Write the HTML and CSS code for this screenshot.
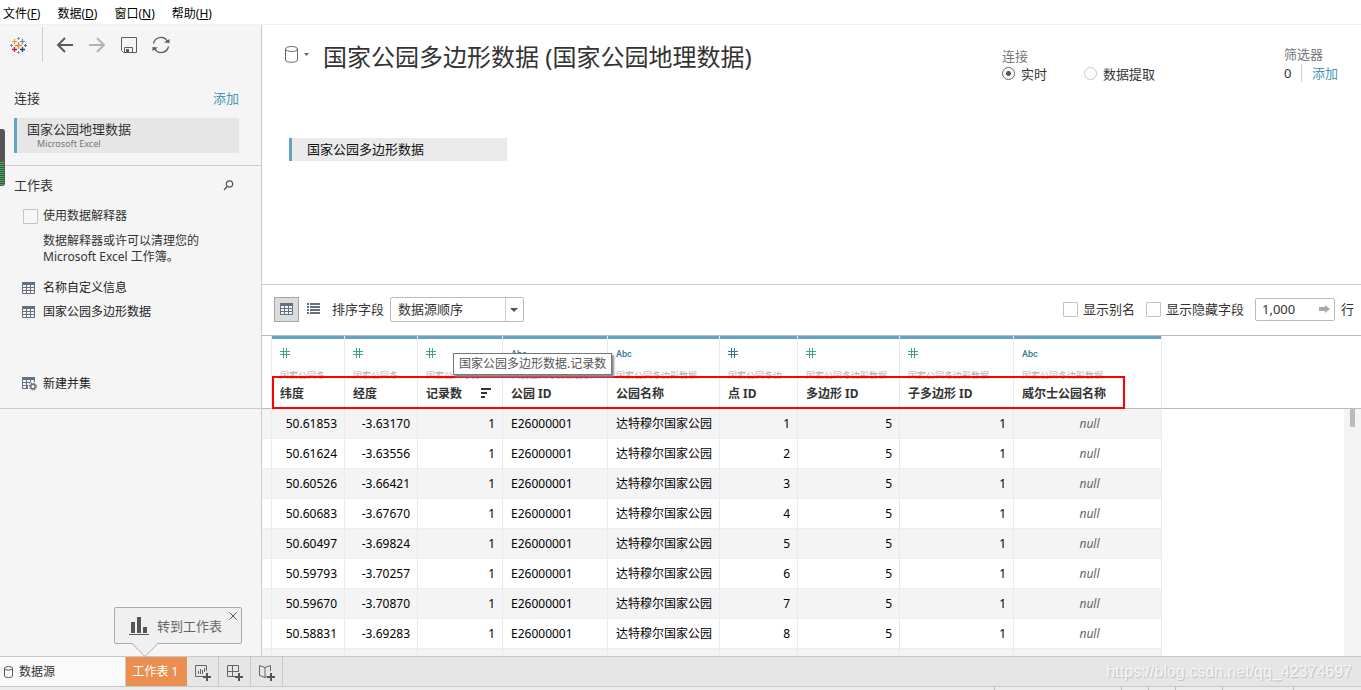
FILE: index.html
```html
<!DOCTYPE html>
<html lang="zh-CN">
<head>
<meta charset="utf-8">
<title>数据源</title>
<link rel="stylesheet" href="styles.css">
</head>
<body>
<svg class="defs" aria-hidden="true">
  <symbol id="grid" viewBox="0 0 13 12"><path d="M0 0h13v12H0z" fill="#667180"/><path d="M1 3h3v2H1zM5 3h3v2H5zM9 3h3v2H9zM1 6h3v2H1zM5 6h3v2H5zM9 6h3v2H9zM1 9h3v2H1zM5 9h3v2H5zM9 9h3v2H9z" fill="#f5f5f5"/></symbol>
  <symbol id="hash" viewBox="0 0 10 10"><path d="M3.5 0v10M6.5 0v10M0 3.5h10M0 6.5h10" stroke="currentColor" fill="none"/></symbol>
  <symbol id="plus" viewBox="0 0 8 8"><path d="M4 0v8M0 4h8" stroke="#555" stroke-width="2"/></symbol>
</svg>
<nav class="menu">
  <button>文件(<u>F</u>)</button><button>数据(<u>D</u>)</button><button>窗口(<u>N</u>)</button><button>帮助(<u>H</u>)</button>
</nav>
<div class="workspace">
  <aside class="sidebar">
    <div class="toolbar">
      <button class="logo" aria-label="开始"><svg width="18" height="18" viewBox="0 0 18 18" fill="none"><path d="M9.500 6v7M6 9.500h7" stroke="#eb8a3c" stroke-width="1.500"/><path d="M5.500 3v5M3 5.500h5" stroke="#e8953a" stroke-width="1.200"/><path d="M13.500 3v5M11 5.500h5" stroke="#5b879b" stroke-width="1.200"/><path d="M5.500 11v5M3 13.500h5" stroke="#c72037" stroke-width="1.300"/><path d="M13.500 11v5M11 13.500h5" stroke="#1f447e" stroke-width="1.300"/><path d="M9.500 1v3M8 2.500h3M1 9.500h3M2.500 8v3" stroke="#7299ac"/><path d="M9.500 15v3M8 16.500h3" stroke="#8a93b5"/><path d="M15 9.500h3M16.500 8v3" stroke="#5c6692"/></svg></button>
      <button aria-label="后退"><svg width="18" height="16" viewBox="0 0 18 16" fill="none" stroke="#5c5c5c" stroke-width="2"><path d="M17 8H2M9 1L2 8l7 7"/></svg></button>
      <button aria-label="前进"><svg width="18" height="16" viewBox="0 0 18 16" fill="none" stroke="#b3b3b3" stroke-width="2"><path d="M1 8h15M9 1l7 7-7 7"/></svg></button>
      <button aria-label="保存"><svg width="18" height="18" viewBox="0 0 18 18" fill="none" stroke="#5c5c5c"><path d="M1.500 1.500h15v15h-13l-2-2zM4.500 16v-4.500h8V16"/><path d="M6 13h3v3H6z" fill="#5c5c5c" stroke="none"/></svg></button>
      <button aria-label="刷新"><svg width="18" height="18" viewBox="0 0 18 18" fill="none" stroke="#5c5c5c" stroke-width="1.300"><path d="M1.500 7.500A7.500 7.500 0 0 1 15.500 5.500M16.500 10.500A7.500 7.500 0 0 1 2.500 12.500"/><path d="M12 6.500l5.500.500V3zM6 11.500L.5 11v4z" fill="#5c5c5c" stroke="none"/></svg></button>
    </div>
    <section class="connections">
      <header><h2>连接</h2><a href="#">添加</a></header>
      <button class="connection"><b>国家公园地理数据</b><small>Microsoft Excel</small></button>
    </section>
    <section class="sheets">
      <header><h2>工作表</h2><button aria-label="搜索"><svg width="11" height="11" viewBox="0 0 11 11" fill="none" stroke="#555" stroke-width="1.200"><circle cx="6.500" cy="4" r="3.200"/><path d="M4 6.500L1 10"/></svg></button></header>
      <label class="check"><input type="checkbox">使用数据解释器</label>
      <p>数据解释器或许可以清理您的 Microsoft Excel 工作簿。</p>
      <ul>
        <li><svg width="13" height="12"><use href="#grid"/></svg>名称自定义信息</li>
        <li><svg width="13" height="12"><use href="#grid"/></svg>国家公园多边形数据</li>
      </ul>
      <button class="union"><svg width="15" height="14" viewBox="0 0 15 14"><path d="M0 0h13v5H9L6 9v3H0z" fill="#667180"/><path d="M1 3h3v2H1zM5 3h3v2H5zM9 3h3v2H9zM1 6h3v2H1zM5 6h2v2H5zM1 9h3v2H1z" fill="#f5f5f5"/><circle cx="11" cy="9.500" r="4.500" fill="#f5f5f5"/><circle cx="11" cy="9.500" r="2.300" fill="none" stroke="#667180" stroke-width="1.500"/><circle cx="11" cy="9.500" r="3.400" fill="none" stroke="#667180" stroke-width="1.200" stroke-dasharray="1.400 1.270"/></svg>新建并集</button>
    </section>
    <div class="meter"></div>
  </aside>
  <main>
    <section class="canvas">
      <div class="heading">
        <button class="source" aria-label="数据源"><svg width="24" height="17" viewBox="0 0 24 17" fill="none" stroke="#666"><path d="M.5 3v11c0 3 12 3 12 0V3"/><ellipse cx="6.500" cy="3" rx="6" ry="2.500"/><path d="M19 7h5l-2.500 3z" fill="#666" stroke="none"/></svg></button>
        <h1>国家公园多边形数据 (国家公园地理数据)</h1>
        <fieldset class="mode">
          <legend>连接</legend>
          <label><input type="radio" name="mode" checked>实时</label>
          <label><input type="radio" name="mode">数据提取</label>
        </fieldset>
        <div class="filters"><span>筛选器</span><div><output>0</output><a href="#">添加</a></div></div>
      </div>
      <button class="node">国家公园多边形数据</button>
    </section>
    <section class="options">
      <button class="view on" aria-label="网格"><svg width="13" height="12"><use href="#grid"/></svg></button>
      <button class="view" aria-label="列表"><svg width="13" height="12" viewBox="0 0 13 12" fill="#667180"><path d="M0 0h2v2H0zM0 3h2v2H0zM0 6h2v2H0zM0 9h2v2H0zM3 0h10v2H3zM3 3h10v2H3zM3 6h10v2H3zM3 9h10v2H3z"/></svg></button>
      <label for="sort">排序字段</label>
      <div class="picker"><select id="sort"><option>数据源顺序</option></select><svg width="8" height="4" viewBox="0 0 8 4"><path d="M0 0h8L4 4z" fill="#555"/></svg></div>
      <label class="check first"><input type="checkbox">显示别名</label>
      <label class="check"><input type="checkbox">显示隐藏字段</label>
      <div class="rows"><input id="rows" type="text" value="1,000"><svg width="11" height="8" viewBox="0 0 11 8"><path d="M0 2h6V0l5 4-5 4V6H0z" fill="#aaa"/></svg></div>
      <label for="rows">行</label>
    </section>
    <section class="data">
      <table>
        <colgroup><col class="w-gutter"><col class="w-lat"><col class="w-lat"><col class="w-count"><col class="w-id"><col class="w-name"><col class="w-point"><col class="w-poly"><col class="w-sub"><col class="w-wales"><col></colgroup>
        <thead><tr>
          <th class="gutter"></th>
          <th><div class="field"><svg><use href="#hash"/></svg><small>国家公园多</small><span>纬度</span></div></th>
          <th><div class="field"><svg><use href="#hash"/></svg><small>国家公园多</small><span>经度</span></div></th>
          <th><div class="field"><svg><use href="#hash"/></svg><small>国家公园多边</small><span>记录数<svg class="sort" viewBox="0 0 11 10"><path d="M1 1h10M1 5h6M1 9h4" stroke="#333" stroke-width="2"/></svg></span></div></th>
          <th><div class="field"><i>Abc</i><small>国家公园多边形数据</small><span>公园 ID</span></div></th>
          <th><div class="field"><i>Abc</i><small>国家公园多边形数据</small><span>公园名称</span></div></th>
          <th><div class="field dim"><svg><use href="#hash"/></svg><small>国家公园多边</small><span>点 ID</span></div></th>
          <th><div class="field"><svg><use href="#hash"/></svg><small>国家公园多边形数据</small><span>多边形 ID</span></div></th>
          <th><div class="field"><svg><use href="#hash"/></svg><small>国家公园多边形数据</small><span>子多边形 ID</span></div></th>
          <th><div class="field"><i>Abc</i><small>国家公园多边形数据</small><span>威尔士公园名称</span></div></th>
          <th class="rest"></th>
        </tr></thead>
        <tbody>
          <tr><td></td><td>50.61853</td><td>-3.63170</td><td>1</td><td>E26000001</td><td>达特穆尔国家公园</td><td>1</td><td>5</td><td>1</td><td>null</td><td></td></tr>
          <tr><td></td><td>50.61624</td><td>-3.63556</td><td>1</td><td>E26000001</td><td>达特穆尔国家公园</td><td>2</td><td>5</td><td>1</td><td>null</td><td></td></tr>
          <tr><td></td><td>50.60526</td><td>-3.66421</td><td>1</td><td>E26000001</td><td>达特穆尔国家公园</td><td>3</td><td>5</td><td>1</td><td>null</td><td></td></tr>
          <tr><td></td><td>50.60683</td><td>-3.67670</td><td>1</td><td>E26000001</td><td>达特穆尔国家公园</td><td>4</td><td>5</td><td>1</td><td>null</td><td></td></tr>
          <tr><td></td><td>50.60497</td><td>-3.69824</td><td>1</td><td>E26000001</td><td>达特穆尔国家公园</td><td>5</td><td>5</td><td>1</td><td>null</td><td></td></tr>
          <tr><td></td><td>50.59793</td><td>-3.70257</td><td>1</td><td>E26000001</td><td>达特穆尔国家公园</td><td>6</td><td>5</td><td>1</td><td>null</td><td></td></tr>
          <tr><td></td><td>50.59670</td><td>-3.70870</td><td>1</td><td>E26000001</td><td>达特穆尔国家公园</td><td>7</td><td>5</td><td>1</td><td>null</td><td></td></tr>
          <tr><td></td><td>50.58831</td><td>-3.69283</td><td>1</td><td>E26000001</td><td>达特穆尔国家公园</td><td>8</td><td>5</td><td>1</td><td>null</td><td></td></tr>
          <tr><td></td><td></td><td></td><td></td><td></td><td></td><td></td><td></td><td></td><td></td><td></td></tr>
        </tbody>
      </table>
      <div class="scrollbar"><div class="thumb"></div></div>
      <div class="marker"></div>
      <div class="tooltip" role="tooltip">国家公园多边形数据.记录数</div>
    </section>
  </main>
</div>
<footer class="tabs">
  <button class="tab-source"><svg width="9" height="12" viewBox="0 0 9 12" fill="none" stroke="#555"><path d="M.5 2v8c0 2 8 2 8 0V2"/><ellipse cx="4.500" cy="2.300" rx="4" ry="1.800"/></svg>数据源</button>
  <button class="tab-sheet">工作表 1</button>
  <button class="add" aria-label="新建工作表"><svg width="16" height="16" viewBox="0 0 16 16" fill="none" stroke="#666"><path d="M8 11.500H.5V.5h11V6M3.500 9V6M5.500 9V4M7.500 9V5M9.500 7V3"/><use href="#plus" x="8" y="8" width="8" height="8"/></svg></button>
  <button class="add" aria-label="新建仪表板"><svg width="16" height="16" viewBox="0 0 16 16" fill="none" stroke="#666"><path d="M8 11.500H.5V.5h11V6M5.500 0v12M0 6.500h12"/><use href="#plus" x="8" y="8" width="8" height="8"/></svg></button>
  <button class="add" aria-label="新建故事"><svg width="16" height="16" viewBox="0 0 16 16" fill="none" stroke="#666"><path d="M6 2.500L.5.500v10L6 12.500zl5.500-2V6M6 12.500l2-1"/><use href="#plus" x="8" y="8" width="8" height="8"/></svg></button>
  <span class="watermark">https://blog.csdn.net/qq_42374697</span>
  <div class="hint">
    <svg class="tail" width="26" height="14" viewBox="0 0 26 14"><path d="M0 0h26L13 13z" fill="#f0f0f0"/><path d="M0 .5l13 13 13-13" fill="none" stroke="#aaa"/></svg>
    <svg width="20" height="18" viewBox="0 0 20 18" fill="#555"><path d="M2 5h4v11H2zM8 0h4v16H8zM14 10h4v6h-4zM0 17h20v1H0z"/></svg>
    <span>转到工作表</span>
    <button aria-label="关闭"><svg width="8" height="8" viewBox="0 0 8 8" stroke="#555"><path d="M.5.500l7 7M7.500.500l-7 7"/></svg></button>
  </div>
</footer>
<div class="status"><span class="s1"></span><span class="s2"></span><span class="s3"></span><span class="s4"></span><span class="s5"></span><span class="s6"></span></div>
</body>
</html>
```
FILE: styles.css
```css
* { box-sizing: border-box; }
body {
  margin: 0;
  height: 100vh;
  display: flex;
  flex-direction: column;
  overflow: hidden;
  background: #fff;
  color: #333;
  font: 12px/16px "Noto Sans", "Noto Sans CJK SC", sans-serif;
}
button, input, select { font: inherit; color: inherit; }
button { background: none; border: 0; padding: 0; text-align: left; }
svg { display: block; flex: none; }
h1, h2, p, ul { margin: 0; padding: 0; font-weight: 400; }
a { color: #4996b2; text-decoration: none; }
.defs { position: absolute; width: 0; height: 0; }

.menu { display: flex; gap: 17px; height: 25px; padding: 4px 3px 0; color: #000; border-bottom: 1px solid #f0f0f0; }
.workspace { flex: 1; min-height: 0; display: flex; }

.sidebar { position: relative; width: 262px; flex: none; background: #f5f5f5; border-right: 1px solid #ccc; }
.toolbar { display: flex; align-items: center; gap: 14px; height: 39px; padding-left: 9px; }
.logo { height: 35px; width: 34px; border-right: 1px solid #ccc; }
.logo + button { margin-left: -1px; }
.sidebar header { display: flex; justify-content: space-between; align-items: center; height: 20px; }
h2, header a { font-size: 13px; line-height: 20px; }
.connections { padding: 24px 22px 12px 14px; border-bottom: 1px solid #ccc; }
.connection { display: block; width: 100%; height: 35px; margin-top: 10px; padding: 2px 10px 4px; background: #e6e6e6; border-left: 3px solid #62a3c6; }
.connection b { display: block; font-weight: 400; font-size: 13px; line-height: 18px; }
.connection small { display: block; padding-left: 10px; font-size: 9px; line-height: 11px; color: #777; }
.sheets { padding: 9px 27px 12px 14px; border-bottom: 1px solid #ccc; }
.check { display: flex; align-items: center; gap: 5px; }
.check input { appearance: none; width: 15px; height: 15px; margin: 0; background: #fff; border: 1px solid #c4c4c4; border-radius: 1px; }
.sheets .check { margin: 13px 0 0 9px; }
.sheets .check input { background: #f7f7f7; }
.sheets p { margin: 9px 20px 0 29px; }
.sheets ul { list-style: none; margin-top: 11px; }
.sheets li, .union { display: flex; align-items: center; gap: 8px; height: 24px; padding-left: 8px; color: #222; }
.union { gap: 6px; margin-top: 48px; }
.meter { position: absolute; left: 0; top: 104px; width: 5px; height: 57px; border: 1px solid #555; border-left: 0; border-radius: 0 3px 3px 0; background: linear-gradient(#555 32px, transparent 32px), repeating-linear-gradient(#37b558 0 1px, #4a4a4a 1px 2px); }

main { flex: 1; min-width: 0; display: flex; flex-direction: column; }
.canvas { height: 260px; border-bottom: 1px solid #ccc; }
.heading { display: flex; height: 64px; padding: 14px 23px 0 23px; font-size: 13px; }
.source { height: 30px; }
h1 { margin-left: 14px; font-size: 24px; line-height: 35px; white-space: nowrap; }
.mode { margin: 9px 0 0 auto; width: 282px; border: 0; padding: 0; display: flex; gap: 37px; }
.mode legend, .filters span { padding: 0; color: #777; line-height: 17px; }
.mode label { display: flex; align-items: center; gap: 6px; height: 17px; }
.mode input { appearance: none; width: 13px; height: 13px; margin: 0; border: 1px solid #c8c8c8; border-radius: 50%; }
.mode input:checked { border-color: #666; background: radial-gradient(circle, #555 2px, transparent 3px); }
.filters { margin-top: 7px; }
.filters span { display: block; }
.filters div { display: flex; }
.filters output { width: 18px; height: 18px; margin-top: 1px; line-height: 19px; border-right: 1px solid #ccc; }
.filters a { padding-left: 10px; line-height: 20px; }
.node { display: block; margin: 49px 0 0 27px; width: 218px; height: 23px; padding-left: 15px; font-size: 13px; line-height: 23px; color: #111; background: #ebebeb; border-left: 3px solid #62a3c6; }

.options { display: flex; align-items: center; height: 51px; padding: 0 7px 2px 12px; font-size: 13px; border-bottom: 1px solid #bbb; }
.view { width: 25px; height: 25px; display: flex; align-items: center; justify-content: center; }
.view.on { background: #dcdcdc; border: 1px solid #a5a5a5; margin-right: 2px; }
.view + label { margin: 0 6px 0 6px; }
.picker { position: relative; width: 134px; height: 25px; }
.picker select { appearance: none; width: 100%; height: 100%; padding: 0 7px; border: 1px solid #bbb; border-radius: 2px; background: linear-gradient(#ccc, #ccc) 114px 0 / 1px 100% no-repeat #fff; }
.picker svg { position: absolute; right: 6px; top: 11px; }
.options .check { margin-right: 11px; }
.options .first { margin-left: auto; }
.rows { position: relative; width: 80px; height: 23px; margin-right: 6px; }
.rows input { width: 100%; height: 100%; padding: 0 6px; border: 1px solid #bbb; border-radius: 2px; }
.rows svg { position: absolute; right: 5px; top: 7px; }

.data { position: relative; flex: 1; min-height: 0; overflow: hidden; }
table { table-layout: fixed; width: 100%; border-collapse: separate; border-spacing: 0; }
.w-gutter { width: 10px; }
.w-lat { width: 73px; }
.w-count { width: 85px; }
.w-id { width: 105px; }
.w-name { width: 112px; }
.w-point { width: 78px; }
.w-poly { width: 102px; }
.w-sub { width: 114px; }
.w-wales { width: 148px; }
th { height: 73px; padding: 0; vertical-align: top; text-align: left; border-right: 1px solid #eaeaea; border-bottom: 1px solid #bbb; }
.field { border-top: 3px solid #62a3c6; padding: 9px 8px 0; height: 72px; color: #3da683; overflow: hidden; }
.field svg { width: 10px; height: 10px; }
.field i { display: block; height: 10px; font: 500 9px/12px Roboto, sans-serif; color: #30799a; }
.field.dim { color: #30799a; }
.field small { display: block; margin-top: 12px; height: 9px; overflow: hidden; font-size: 9px; line-height: 11px; font-weight: 400; color: #aaa; white-space: nowrap; }
.field span { display: flex; justify-content: space-between; align-items: center; margin-top: 7px; line-height: 16px; color: #333; white-space: nowrap; }
.field .sort { width: 11px; margin: 0 3px 2px 0; }
td { height: 30px; padding: 0 7px; text-align: right; color: #000; border-right: 1px solid #eaeaea; border-bottom: 1px solid #eee; white-space: nowrap; }
tr:nth-child(odd) td { background: #f4f4f4; }
td:nth-child(5), td:nth-child(6) { text-align: left; padding-left: 8px; }
td:nth-child(10) { text-align: center; padding-left: 11px; font-style: italic; color: #666; }
tbody tr td:last-child { background: #fff; border: 0; }
th:last-child { border-right: 0; }
.scrollbar { position: absolute; right: 0; top: 73px; bottom: 0; width: 17px; background: #f4f4f4; }
.thumb { width: 5px; height: 18px; margin-left: 6px; background: #bbb; border-radius: 1px; }
.marker { position: absolute; left: 10px; top: 40px; width: 853px; height: 33px; border: 2px solid #f00; }
.tooltip { position: absolute; left: 191px; top: 17px; padding: 1px 5px; line-height: 18px; background: #fff; border: 1px solid #767676; box-shadow: 2px 2px 2px #888; color: #555; }

.tabs { position: relative; display: flex; height: 30px; background: #e6e6e6; border-top: 1px solid #c8c8c8; }
.tab-source { display: flex; align-items: center; gap: 6px; width: 125px; padding-left: 4px; background: #fafafa; }
.tab-sheet { width: 62px; padding-right: 2px; text-align: center; color: #fff; background: #eb8f50; border-left: 1px solid #ccc; }
.add { width: 32px; padding: 2px 0 0 1px; display: flex; align-items: center; justify-content: center; border-right: 1px solid #c8c8c8; }
.watermark { margin-left: auto; padding-right: 9px; font: 16px/29px "Liberation Sans", Arial, sans-serif; color: #f6f6f6; text-shadow: 1px 1px 1px #bbb; }
.hint { position: absolute; left: 114px; bottom: 42px; width: 128px; height: 37px; display: flex; align-items: center; gap: 8px; padding-left: 14px; background: #f0f0f0; border: 1px solid #aaa; border-radius: 2px; font-size: 13px; color: #666; }
.hint .tail { position: absolute; left: 17px; top: 35px; }
.hint button { position: absolute; right: 4px; top: 4px; }
.status { display: flex; justify-content: flex-end; height: 4px; background: #ececec; border-top: 1px solid #c8c8c8; }
.status span { border-left: 1px solid #bbb; }
.s1 { width: 127px; }
.s2, .s3 { width: 27px; }
.s4 { width: 47px; }
.s5 { width: 71px; }
.s6 { width: 68px; }
```
